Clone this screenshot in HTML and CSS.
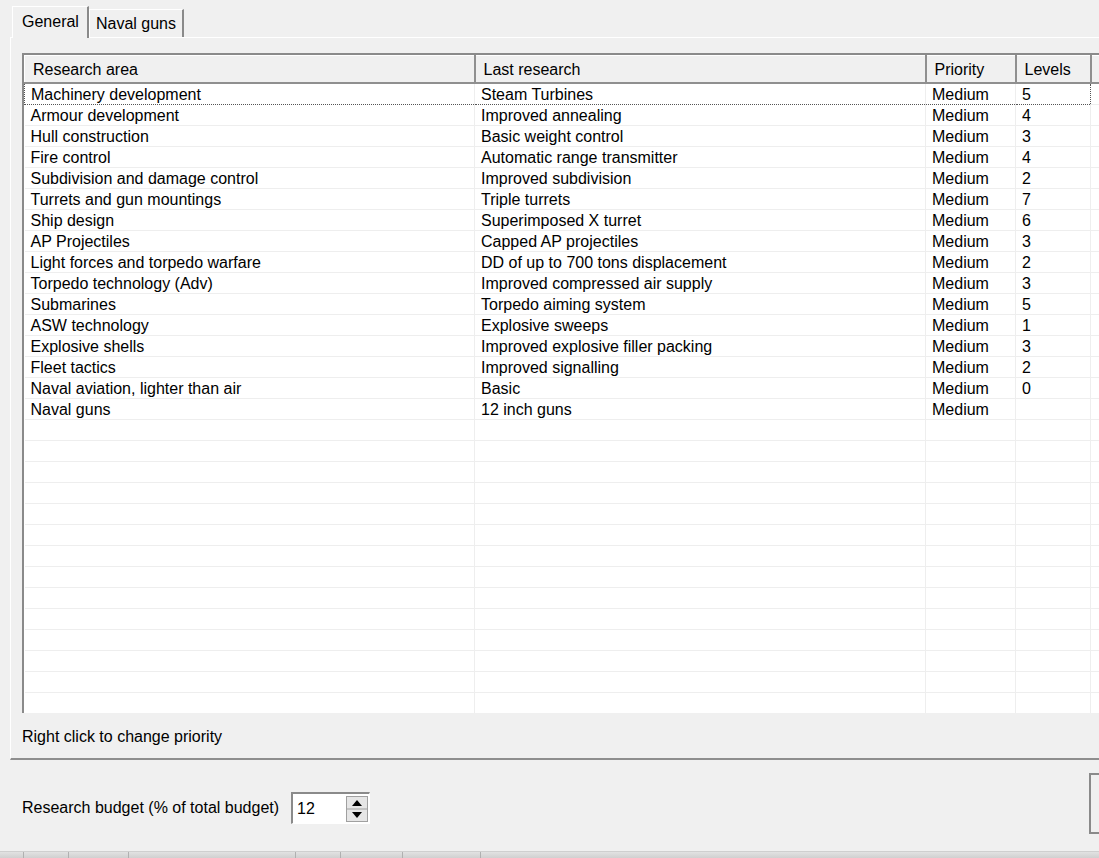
FILE: index.html
```html
<!DOCTYPE html>
<html>
<head>
<meta charset="utf-8">
<link rel="stylesheet" href="styles.css">
</head>
<body>
<div class="window">
  <div class="tabs">
    <div class="tab tab-active">General</div>
    <div class="tab">Naval guns</div>
  </div>
  <div class="panel">
    <div class="listview">
      <table class="grid">
        <colgroup>
          <col class="c1"><col class="c2"><col class="c3"><col class="c4"><col class="c5">
        </colgroup>
        <thead>
          <tr>
            <th>Research area</th>
            <th>Last research</th>
            <th>Priority</th>
            <th>Levels</th>
            <th></th>
          </tr>
        </thead>
        <tbody>
          <tr class="focus"><td>Machinery development</td><td>Steam Turbines</td><td>Medium</td><td>5</td><td></td></tr>
          <tr><td>Armour development</td><td>Improved annealing</td><td>Medium</td><td>4</td><td></td></tr>
          <tr><td>Hull construction</td><td>Basic weight control</td><td>Medium</td><td>3</td><td></td></tr>
          <tr><td>Fire control</td><td>Automatic range transmitter</td><td>Medium</td><td>4</td><td></td></tr>
          <tr><td>Subdivision and damage control</td><td>Improved subdivision</td><td>Medium</td><td>2</td><td></td></tr>
          <tr><td>Turrets and gun mountings</td><td>Triple turrets</td><td>Medium</td><td>7</td><td></td></tr>
          <tr><td>Ship design</td><td>Superimposed X turret</td><td>Medium</td><td>6</td><td></td></tr>
          <tr><td>AP Projectiles</td><td>Capped AP projectiles</td><td>Medium</td><td>3</td><td></td></tr>
          <tr><td>Light forces and torpedo warfare</td><td>DD of up to 700 tons displacement</td><td>Medium</td><td>2</td><td></td></tr>
          <tr><td>Torpedo technology (Adv)</td><td>Improved compressed air supply</td><td>Medium</td><td>3</td><td></td></tr>
          <tr><td>Submarines</td><td>Torpedo aiming system</td><td>Medium</td><td>5</td><td></td></tr>
          <tr><td>ASW technology</td><td>Explosive sweeps</td><td>Medium</td><td>1</td><td></td></tr>
          <tr><td>Explosive shells</td><td>Improved explosive filler packing</td><td>Medium</td><td>3</td><td></td></tr>
          <tr><td>Fleet tactics</td><td>Improved signalling</td><td>Medium</td><td>2</td><td></td></tr>
          <tr><td>Naval aviation, lighter than air</td><td>Basic</td><td>Medium</td><td>0</td><td></td></tr>
          <tr><td>Naval guns</td><td>12 inch guns</td><td>Medium</td><td></td><td></td></tr>
          <tr><td></td><td></td><td></td><td></td><td></td></tr>
          <tr><td></td><td></td><td></td><td></td><td></td></tr>
          <tr><td></td><td></td><td></td><td></td><td></td></tr>
          <tr><td></td><td></td><td></td><td></td><td></td></tr>
          <tr><td></td><td></td><td></td><td></td><td></td></tr>
          <tr><td></td><td></td><td></td><td></td><td></td></tr>
          <tr><td></td><td></td><td></td><td></td><td></td></tr>
          <tr><td></td><td></td><td></td><td></td><td></td></tr>
          <tr><td></td><td></td><td></td><td></td><td></td></tr>
          <tr><td></td><td></td><td></td><td></td><td></td></tr>
          <tr><td></td><td></td><td></td><td></td><td></td></tr>
          <tr><td></td><td></td><td></td><td></td><td></td></tr>
          <tr><td></td><td></td><td></td><td></td><td></td></tr>
          <tr><td></td><td></td><td></td><td></td><td></td></tr>
        </tbody>
      </table>
    </div>
    <div class="hint">Right click to change priority</div>
  </div>
  <div class="budget-row">
    <span class="budget-label">Research budget (% of total budget)</span>
    <div class="spin">
      <span class="spin-value">12</span>
      <div class="spin-buttons">
        <svg width="22" height="26" viewBox="0 0 22 26">
          <rect x="0.5" y="0.5" width="21" height="25" fill="#e6e6e6" stroke="#a0a0a0"/>
          <line x1="1" y1="13" x2="21" y2="13" stroke="#a0a0a0"/>
          <polygon points="6,10 16,10 11,4" fill="#000"/>
          <polygon points="6,16 16,16 11,22" fill="#000"/>
        </svg>
      </div>
    </div>
    <div class="side-button"></div>
  </div>
  <div class="bottom-strip">
    <span class="tick t1"></span><span class="tick t2"></span><span class="tick t3"></span>
    <span class="tick t4"></span><span class="tick t5"></span><span class="tick t6"></span><span class="tick t7"></span>
  </div>
</div>
</body>
</html>
```

FILE: styles.css
```css
html, body {
  margin: 0;
  padding: 0;
  background: #f0f0f0;
  overflow: hidden;
}
body {
  font-family: "Liberation Sans", Arial, sans-serif;
  font-size: 16px;
  letter-spacing: 0;
  color: #000;
  width: 1099px;
  height: 858px;
}
.window {
  width: 1099px;
  height: 858px;
  display: flex;
  flex-direction: column;
  overflow: hidden;
}
.tabs {
  display: flex;
  align-items: flex-end;
  height: 37px;
  padding-left: 12px;
  box-sizing: border-box;
}
.tab {
  height: 28px;
  padding: 0 6px 0 6px;
  line-height: 27px;
  box-sizing: border-box;
  border-top: 1px solid #fff;
  border-left: 1px solid #fff;
  border-right: 2px solid #8a8a8a;
}
.tab-active {
  height: 32px;
  line-height: 29px;
  padding: 0 8px 0 9px;
  position: relative;
  z-index: 1;
  margin-bottom: -1px;
  background: #f0f0f0;
}
.panel {
  margin-left: 10px;
  height: 725px;
  box-sizing: border-box;
  border-top: 1px solid #fff;
  border-left: 1px solid #fff;
  border-bottom: 2px solid #8e8e8e;
  padding: 15px 0 0 11px;
  display: flex;
  flex-direction: column;
}
.listview {
  width: 1200px;
  height: 660px;
  box-sizing: border-box;
  border-top: 2px solid #8a8a8a;
  border-left: 2px solid #8a8a8a;
  background: #fff;
  overflow: hidden;
}
.grid {
  border-collapse: collapse;
  table-layout: fixed;
  width: 1166px;
}
.c1 { width: 450px; }
.c2 { width: 451px; }
.c3 { width: 90px; }
.c4 { width: 75px; }
.c5 { width: 100px; }
.grid th {
  height: 28px;
  background: #f0f0f0;
  font-weight: normal;
  text-align: left;
  padding: 1px 0 0 8px;
  box-sizing: border-box;
  border-left: 1px solid #fff;
  border-top: 1px solid #fff;
  border-right: 2px solid #8f8f8f;
  border-bottom: 2px solid #8f8f8f;
  white-space: nowrap;
  overflow: hidden;
}
.grid td {
  height: 21px;
  line-height: 18px;
  padding: 2px 0 0 6px;
  box-sizing: border-box;
  border-right: 1px solid #eeeeee;
  border-bottom: 1px solid #eeeeee;
  white-space: nowrap;
  overflow: hidden;
}
.grid tbody tr:first-child td {
  border-top: 2px solid #fff;
}
.focus td:nth-child(-n+4) {
  border-top: 1px dotted #555 !important;
  border-bottom: 1px dotted #555;
}
.focus td:first-child {
  border-left: 1px dotted #555;
}
.focus td:nth-child(4) {
  border-right: 1px dotted #555;
}
.hint {
  padding-top: 15px;
  line-height: 18px;
}
.budget-row {
  height: 91px;
  display: flex;
  align-items: center;
  padding-left: 22px;
  padding-top: 5px;
  box-sizing: border-box;
  position: relative;
}
.budget-label {
  margin-right: 12px;
}
.spin {
  width: 79px;
  height: 32px;
  box-sizing: border-box;
  border-top: 2px solid #8a8a8a;
  border-left: 2px solid #8a8a8a;
  border-right: 1px solid #fff;
  border-bottom: 1px solid #fff;
  background: #fff;
  display: flex;
  align-items: center;
  justify-content: space-between;
  padding-left: 4px;
  padding-right: 1px;
  font-size: 16px;
}
.spin-buttons {
  display: flex;
}
.spin-buttons svg {
  display: block;
}
.side-button {
  position: absolute;
  left: 1089px;
  top: 13px;
  width: 40px;
  height: 61px;
  border: 2px solid #8a8a8a;
  border-right: none;
  box-sizing: border-box;
  background: #f0f0f0;
}
.bottom-strip {
  height: 6px;
  margin-top: auto;
  border-top: 1px solid #cfcfcf;
  background: linear-gradient(#e2e2e2, #d0d0d0);
  position: relative;
}
.tick {
  position: absolute;
  top: 0;
  width: 1px;
  height: 6px;
  background: #b0b0b0;
}
.t1 { left: 23px; }
.t2 { left: 68px; }
.t3 { left: 128px; }
.t4 { left: 295px; }
.t5 { left: 340px; }
.t6 { left: 402px; }
.t7 { left: 480px; }
```
